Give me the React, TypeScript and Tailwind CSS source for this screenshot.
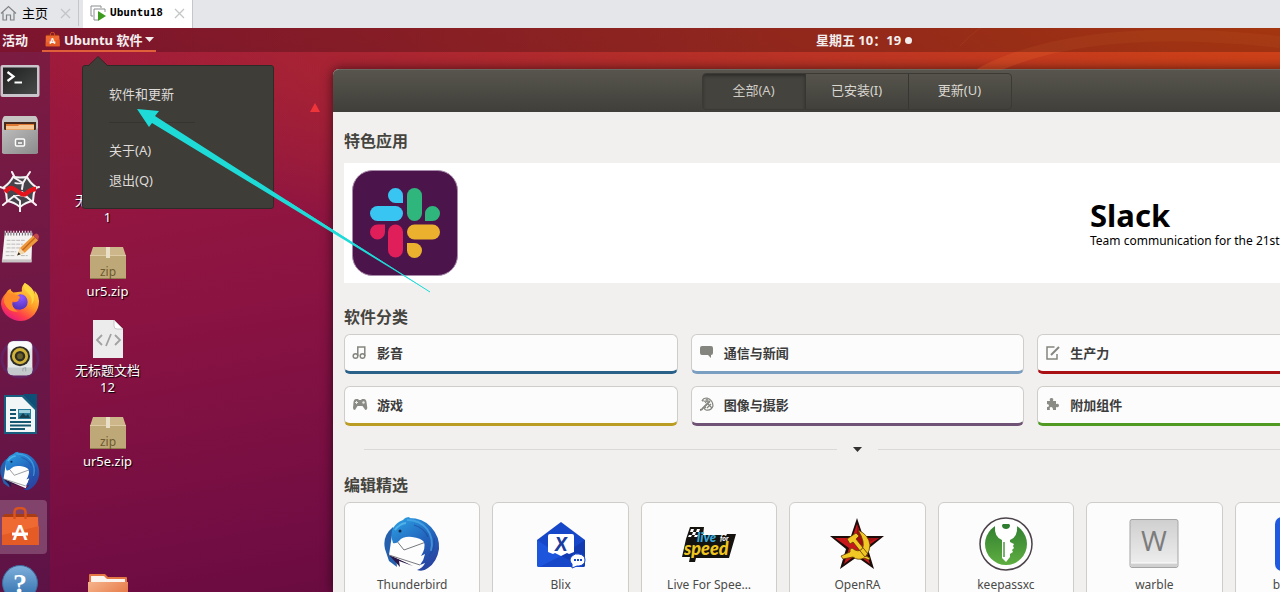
import type { ReactNode } from 'react';

const uiFont = "font-['Noto_Sans','Noto_Sans_CJK_SC',sans-serif]";

function TerminalIcon() {
  return (
    <svg width="40" height="40" viewBox="0 0 40 40">
      <defs>
        <linearGradient id="term" x1="0" y1="0" x2="1" y2="1">
          <stop offset="0" stopColor="#1e2020" />
          <stop offset="1" stopColor="#484a4a" />
        </linearGradient>
      </defs>
      <rect x="0.5" y="6" width="39" height="32" rx="2" fill="#c9c5ca" />
      <rect x="3" y="8.500" width="34" height="26.500" fill="url(#term)" />
      <path d="M7.500 13l6 4.500-6 4.500" fill="none" stroke="#fff" strokeWidth="2.200" />
      <path d="M14.500 23.500H22" stroke="#fff" strokeWidth="2" />
    </svg>
  );
}

function FilesIcon() {
  return (
    <svg width="40" height="40" viewBox="0 0 40 40">
      <defs>
        <linearGradient id="cabinet" x1="0" y1="0" x2="1" y2="1">
          <stop offset="0" stopColor="#bdbdbd" />
          <stop offset="1" stopColor="#8b8b8b" />
        </linearGradient>
      </defs>
      <path d="M5 1h30q2 0 3 5v32H2V6q1-5 3-5z" fill="#c7c5c4" />
      <path d="M4 7h32v10H4z" fill="#4a2a1c" />
      <path d="M6 9h28v7H6z" fill="#e07a33" />
      <path d="M6 11h12l1-1h15v6H6z" fill="#f6c795" />
      <path d="M6 14h28v3H6z" fill="#e6a468" />
      <path d="M2 13l3 2h30l3-2v24a2 2 0 0 1-2 2H4a2 2 0 0 1-2-2z" fill="url(#cabinet)" />
      <rect x="15.500" y="24" width="9" height="7" rx="1" fill="#8e8e8e" stroke="#fff" strokeWidth="1.500" />
      <path d="M18 28h4" stroke="#fff" strokeWidth="1.500" />
    </svg>
  );
}

function WebIcon() {
  return (
    <svg width="40" height="42" viewBox="0 0 40 42">
      <path d="M13 6h14l9 11-3 14-13 6-13-6L4 17z" fill="#46434b" />
      <g fill="none" stroke="#f7f1f4" strokeWidth="2" strokeLinecap="round">
        <path d="M13 7q7 1 14 0 3 6 9 10-3 7-3 14-7 1-13 6-6-5-13-6 0-7-3-14 6-4 9-10z" />
        <path d="M12 2l3 6 8 5M30 2l-4 6-3 5-1 6M39 17l-7 2M36 35l-8-7-6-6M20 42V31l-6-5M3 35l11-9M0 17l9 3" />
        <path d="M15 13q4 1 8 0M14 26q7-2 14 2" strokeWidth="1.300" />
      </g>
      <path d="M5 22q5-6 9-3l6 4q4 3 7 0 4-4 9-4" fill="none" stroke="#e3131b" strokeWidth="4.500" />
    </svg>
  );
}

function NotesIcon() {
  return (
    <svg width="42" height="40" viewBox="0 0 42 40">
      <path d="M5 5h29l-1 31H2z" fill="#f4f3f1" />
      <path d="M2 33h31v3H2z" fill="#c9c5c5" />
      <path d="M7 13h20M7 17h17M7 21h18M6 25h11M6 29h9M22 29h7" stroke="#b8b6b4" strokeWidth="1" strokeDasharray="4 1" />
      <path d="M5 6h29" stroke="#5c5560" strokeWidth="4" strokeDasharray="1 2" />
      <path d="M5 4h29" stroke="#fff" strokeWidth="2" strokeDasharray="1 2" />
      <path d="M18 29l3-8L35 8l5 5-14 13z" fill="#ee9a3c" />
      <path d="M23 24L37 10" stroke="#c5671d" strokeWidth="1.500" />
      <path d="M18 29l3-8 5 5z" fill="#f3d8ae" />
      <path d="M18 29l1.500-3.500 2 2z" fill="#222" />
      <path d="M35 8l2-2q3-1 4 3l-1 4z" fill="#c3474c" />
    </svg>
  );
}

function FirefoxIcon() {
  return (
    <svg width="42" height="42" viewBox="0 0 42 42">
      <defs>
        <linearGradient id="fox" x1="0.850" y1="0.050" x2="0.250" y2="1">
          <stop offset="0" stopColor="#ffe44a" />
          <stop offset="0.450" stopColor="#ff9a27" />
          <stop offset="0.750" stopColor="#ff3e4b" />
          <stop offset="1" stopColor="#e31587" />
        </linearGradient>
        <radialGradient id="globe" cx="0.600" cy="0.200" r="0.900">
          <stop offset="0" stopColor="#9059ff" />
          <stop offset="1" stopColor="#4a2cb3" />
        </radialGradient>
      </defs>
      <path
        d="M26 0q-4 4-3 9l-9 1q-3-2-3-4-3 1-5 5Q1 16 1 22q1 8 7 13t14 5q9-1 14-7t5-14q-1-8-5-11l1 4q-3-8-11-12z"
        fill="url(#fox)"
      />
      <path d="M20 12q8-1 9 8 0 7-8 8-9 0-9-8 4 1 7-1 2-1-3-3 1-3 4-4z" fill="url(#globe)" />
      <path d="M6 12q5-2 9 0l4 1q3 1 1 4-3 2-7 2-1 8 6 11-10 1-14-8-2-5 1-10z" fill="#ff8a2b" />
      <path d="M26 0q-3 6 3 10 6 5 4 13 4-5 2-12-3-8-9-11z" fill="#ffd83f" />
    </svg>
  );
}

function SpeakerIcon() {
  return (
    <svg width="42" height="42" viewBox="0 0 42 42">
      <circle cx="21" cy="21" r="19" fill="none" stroke="#5b2c74" strokeWidth="3" opacity="0.6" />
      <rect x="8" y="2" width="26" height="36" rx="6" fill="#e4e7e8" />
      <rect x="9" y="3" width="24" height="9" rx="5" fill="#fbfbfb" />
      <path d="M8 30h26v3q0 5-6 5H14q-6 0-6-5z" fill="#c5cbcd" />
      <circle cx="21" cy="18" r="10.500" fill="#2d2c25" />
      <circle cx="21" cy="18" r="7" fill="none" stroke="#d0b23a" strokeWidth="3" />
      <circle cx="21" cy="18" r="3" fill="#69602a" />
      <path d="M24 34v-3l3-1v4" fill="none" stroke="#99a0a3" />
    </svg>
  );
}

function WriterIcon() {
  return (
    <svg width="40" height="42" viewBox="0 0 40 42">
      <path d="M4 1h20l13 13v26H4z" fill="#175f80" />
      <path d="M6 3h16l13 13v22H6z" fill="#f3f6f7" />
      <path d="M23 0h14v15z" fill="#0e4f77" />
      <path d="M10 16h6M10 20h6M10 24h6M10 28h21M10 31.500h21M10 35h15" stroke="#17566f" strokeWidth="2" />
      <rect x="18" y="15" width="13" height="10" fill="#2b7d9c" />
      <path d="M19 24l4-5 3 3 2-2 2 4z" fill="#153e4e" />
      <path d="M19 16h11v3H19z" fill="#9ed0de" />
    </svg>
  );
}

function ThunderbirdIcon({ size, id }: { size: number; id: string }) {
  return (
    <svg width={size} height={size} viewBox="0 0 56 56">
      <defs>
        <linearGradient id={id} x1="0.200" y1="0" x2="0.800" y2="1">
          <stop offset="0" stopColor="#2c9be0" />
          <stop offset="0.500" stopColor="#2265bd" />
          <stop offset="1" stopColor="#2b3f9d" />
        </linearGradient>
      </defs>
      <path d="M9 11Q-2 20 1 33l4 12 8 6z" fill="#2560ae" />
      <path d="M4 38l12 13-1-6 14 5z" fill="#2b1747" />
      <path d="M8 19l35 0-2 20-5 13L5 39z" fill="#fdfdfd" />
      <path d="M8 19l12 15 22-8M5 39l31 10" fill="none" stroke="#77797e" strokeWidth="1" />
      <path
        d="M9 12Q13 6 19 4q2-3 7-3l-1 1q14 0 22 9 9 10 8 22-2 13-11 19-5 4-11 2 6-2 8-7l-5 2q4-5 5-11l-4 2q5-8 3-14-3-4-12-5-9-1-13 4-3 3-6 2Q6 18 9 12z"
        fill={`url(#${id})`}
      />
      <path d="M23 4q13 0 20 9 7 9 4 22" fill="none" stroke="#53b4ee" strokeWidth="2" opacity="0.600" />
      <path d="M30 9q10 3 14 12M50 22q2 10-5 18" fill="none" stroke="#1c4c9f" strokeWidth="1.200" opacity="0.700" />
      <path d="M11 14q4-6 11-7" fill="none" stroke="#60c1ee" strokeWidth="2" opacity="0.700" />
      <circle cx="16" cy="15" r="1.500" fill="#12294f" />
    </svg>
  );
}

function SoftwareIcon({ size }: { size: number }) {
  return (
    <svg width={size} height={size} viewBox="0 0 40 40">
      <path d="M3 9q0-2 3-2h28q3 0 3 2v4H3z" fill="#a93c13" />
      <path d="M2 10h36l1 27q0 1-1 1H3q-1 0-1-1z" fill="#ef6a33" />
      <path d="M2 28l37-9v18q0 1-1 1H3q-1 0-1-1z" fill="#e55b26" />
      <path d="M14.500 12V5q0-4 5.500-4t5.500 4v7" fill="none" stroke="#d9531f" strokeWidth="2.500" />
      <text x="20" y="33" textAnchor="middle" fontSize="21" fontWeight="700" fill="#fff" fontFamily="Lato, sans-serif">
        A
      </text>
      <path d="M12 27h16" stroke="#fff" strokeWidth="3" />
    </svg>
  );
}

function HelpIcon() {
  return (
    <svg width="40" height="40" viewBox="0 0 40 40">
      <defs>
        <linearGradient id="help" x1="0" y1="0" x2="0" y2="1">
          <stop offset="0" stopColor="#7fb0dc" />
          <stop offset="1" stopColor="#2c6aa9" />
        </linearGradient>
      </defs>
      <circle cx="20" cy="20" r="17.500" fill="url(#help)" stroke="#3c6c9f" />
      <text x="20" y="30" textAnchor="middle" fontSize="28" fill="#fff" fontFamily="Liberation Serif, serif" fontWeight="700">
        ?
      </text>
    </svg>
  );
}

function ZipIcon() {
  return (
    <svg width="38" height="34" viewBox="0 0 38 34" className="text-shadow-none">
      <path d="M4 1h30l3 9H1z" fill="#cdb78a" />
      <path d="M1 9h36v24H1z" fill="#bfa878" />
      <path d="M1 9h36v1H1z" fill="#dccba5" />
      <path d="M1 32h36v1H1z" fill="#927c50" />
      <path d="M17 1h4v11h-4z" fill="#e9dfc7" />
      <text x="19" y="30" textAnchor="middle" fontSize="12" fill="#6d5a2e" fontFamily="Noto Sans, sans-serif">
        zip
      </text>
    </svg>
  );
}

function CodeFileIcon() {
  return (
    <svg width="32" height="40" viewBox="0 0 32 40">
      <path d="M1 1h21l9 9v29H1z" fill="#ececec" />
      <path d="M22 1v6q0 3 3 3h6z" fill="#fff" stroke="#bcbcbc" strokeWidth="0.800" />
      <path d="M10 16l-5 5 5 5M23 16l5 5-5 5M19 15l-5 12" fill="none" stroke="#a2a2a2" strokeWidth="1.800" />
    </svg>
  );
}

function FolderIcon() {
  return (
    <svg width="40" height="36" viewBox="0 0 40 36">
      <defs>
        <linearGradient id="folder" x1="0" y1="0" x2="1" y2="1">
          <stop offset="0" stopColor="#f6b48c" />
          <stop offset="1" stopColor="#e0622c" />
        </linearGradient>
      </defs>
      <path d="M1 2q0-1 1-1h15l3 3h18q1 0 1 1v8H1z" fill="#e57743" />
      <path d="M3 3h13l3 3h18v5H3z" fill="#fbf3ee" />
      <path d="M0 9h40v25q0 2-2 2H2q-2 0-2-2z" fill="url(#folder)" />
    </svg>
  );
}

function SlackIcon() {
  return (
    <svg width="108" height="108" viewBox="0 0 108 108" className="shrink-0">
      <rect x="1.500" y="1.500" width="105" height="105" rx="20" fill="#4b154b" stroke="#a98bab" strokeWidth="1" />
      <g fill="#39c5f1">
        <path d="M44.500 19a7.500 7.500 0 0 1 7.500 7.500V34h-7.500a7.500 7.500 0 0 1 0-15z" />
        <rect x="19" y="37" width="33" height="15" rx="7.500" />
      </g>
      <g fill="#2fb67c">
        <rect x="56" y="19" width="15" height="33" rx="7.500" />
        <path d="M74 52v-7.500a7.500 7.500 0 1 1 7.500 7.500z" />
      </g>
      <g fill="#ebb02e">
        <rect x="56" y="55.500" width="33" height="15" rx="7.500" />
        <path d="M56 74h7.500a7.500 7.500 0 1 1-7.500 7.500z" />
      </g>
      <g fill="#e01e5a">
        <path d="M34 55.500V63a7.500 7.500 0 1 1-7.500-7.500z" />
        <rect x="37" y="55.500" width="15" height="33" rx="7.500" />
      </g>
    </svg>
  );
}

function BlixIcon() {
  return (
    <svg width="56" height="56" viewBox="0 0 56 56">
      <path d="M4 24L28 6l24 18v25q0 2-2 2H6q-2 0-2-2z" fill="#1747c9" />
      <path d="M4 24l24 16L6 51q-2 0-2-2z" fill="#1d55dd" />
      <path d="M52 24L28 40l22 11q2 0 2-2z" fill="#123bb2" />
      <path d="M17 18h22q2 0 2 2v16l-5 2-2-1-6 3-6-3-2 1-5-2V20q0-2 2-2z" fill="#fff" />
      <text x="28" y="35" textAnchor="middle" fontSize="19" fontWeight="900" fontStyle="italic" fill="#1a3c9c" fontFamily="Lato, sans-serif">
        X
      </text>
      <path d="M39 48q-4-4 0-8 3-3 7-2 6 1 6 6t-6 6h-2l-5 2z" fill="#fff" stroke="#1747c9" />
      <path d="M41 44h8" stroke="#1747c9" strokeWidth="2" strokeDasharray="2 1" />
    </svg>
  );
}

function LiveForSpeedIcon() {
  return (
    <svg width="56" height="56" viewBox="0 0 56 56">
      <path d="M9 11h14l-1 8h21l2 1 1-2h9l-7 24H15l-1 4H8l1-5H1l4-18z" fill="#15130f" />
      <path d="M10 13h3l-1 3h3l1-3h3l-1 3h-3l-1 3h3l-1 2h-3l1-2h-3l-1 2H7l1-2h3l1-3H9z" fill="#fff" />
      <g fontFamily="Lato, sans-serif" fontStyle="italic" fontWeight="900">
        <text x="16" y="26" fontSize="13" fill="#3ba9dc">
          live
        </text>
        <text x="39" y="25" fontSize="7" fill="#fff">
          for
        </text>
        <text x="3" y="39" fontSize="18" fill="#efc51f">
          speed
        </text>
      </g>
    </svg>
  );
}

function OpenRaIcon() {
  return (
    <svg width="56" height="56" viewBox="0 0 56 56">
      <path d="M28 2l6 18h21L39 33l6 20-17-12-17 12 6-20L1 20h21z" fill="#1c0c0a" />
      <path d="M28 8l5 14h17L36 32l5 16-13-10-13 10 5-16L6 22h17z" fill="#c9161b" />
      <path d="M28 8l5 14h17L28 31z" fill="#a10f13" />
      <path
        d="M29 14q11 5 12 15 0 6-4 11l4 2-1 2-5-2q-6 3-11-1l-10 2-2-3 9-4q-1-3 2-4 6 5 10 1 4-6-4-19zM18 23l9-6 3 3-3 3 12 15-3 3-12-15-3 2z"
        fill="#f1c824"
        stroke="#5e3a09"
        strokeWidth="0.800"
      />
    </svg>
  );
}

function KeepassIcon() {
  return (
    <svg width="56" height="56" viewBox="0 0 56 56">
      <defs>
        <linearGradient id="keepass" x1="0" y1="0" x2="0" y2="1">
          <stop offset="0" stopColor="#2f7d2f" />
          <stop offset="1" stopColor="#5fae41" />
        </linearGradient>
      </defs>
      <circle cx="28" cy="28" r="26" fill="#fff" stroke="#4c434b" strokeWidth="1.500" />
      <circle cx="28" cy="28" r="21" fill="url(#keepass)" />
      <path d="M19 6h18l2 4q1 11-7 14v2l4 2-1 2 1 2-2 2 1 2-3 2v3l-4 5-4-4V24q-8-3-7-14z" fill="#fff" />
      <path d="M25 8h6q2 1 0 4-3 2-6 0-2-3 0-4z" fill="#2f7d2f" />
      <path d="M26 26v15" stroke="#4a9a3a" strokeWidth="1.500" />
    </svg>
  );
}

function WarbleIcon() {
  return (
    <svg width="56" height="56" viewBox="0 0 56 56">
      <defs>
        <linearGradient id="warble" x1="0" y1="0" x2="0" y2="1">
          <stop offset="0" stopColor="#cfcfcf" />
          <stop offset="1" stopColor="#f0f0f0" />
        </linearGradient>
      </defs>
      <rect x="4" y="3.500" width="48" height="48" rx="2" fill="url(#warble)" stroke="#a5a5a5" />
      <path d="M5 47h46v4H5z" fill="#d0d0d0" />
      <path d="M5 47h46" stroke="#fff" />
      <text x="28" y="35" textAnchor="middle" fontSize="28" fill="#7c7c7c" fontFamily="Open Sans, sans-serif">
        W
      </text>
    </svg>
  );
}

function BlueIcon() {
  return (
    <svg width="56" height="56" viewBox="0 0 56 56">
      <rect x="0" y="1" width="56" height="54" rx="7" fill="#1f5ae0" />
    </svg>
  );
}

function MusicGlyph() {
  return (
    <svg width="16" height="16" viewBox="0 0 16 16" fill="none" stroke="#85857f" strokeWidth="1.500">
      <circle cx="3.500" cy="11" r="2.300" />
      <circle cx="10.500" cy="11" r="2.300" />
      <path d="M5.800 11V2h7v9" />
    </svg>
  );
}

function ChatGlyph() {
  return (
    <svg width="16" height="16" viewBox="0 0 16 16" fill="#85857f">
      <path d="M3 1h9q2 0 2 2v5q0 2-2 2v3l-3-3H3q-2 0-2-2V3q0-2 2-2z" />
    </svg>
  );
}

function EditGlyph() {
  return (
    <svg width="16" height="16" viewBox="0 0 16 16" fill="none" stroke="#85857f" strokeWidth="1.500">
      <path d="M9.500 2H2v12h10V9" />
      <path d="M6 10l8-8" strokeWidth="2" />
    </svg>
  );
}

function GamepadGlyph() {
  return (
    <svg width="16" height="16" viewBox="0 0 16 16">
      <path d="M4 2h2l1 1h2l1-1h2q2 0 2.500 3l.8 6q0 2-2 2L10.500 9h-5L3 13q-2 0-2-2l.5-6Q2 2 4 2z" fill="#8b8b86" />
      <path d="M3 5.500h3M4.500 4v3" stroke="#e8e8e6" />
      <circle cx="11.500" cy="5.500" r="1.200" fill="#e8e8e6" />
    </svg>
  );
}

function PaletteGlyph() {
  return (
    <svg width="16" height="16" viewBox="0 0 16 16" fill="none" stroke="#85857f" strokeWidth="1.200">
      <path d="M3 4q1-3 5-3 6 2 6 8-2 5-7 4-3-1 0-3" />
      <path d="M1 13q2 0 3-2l7-7" strokeWidth="1.800" />
      <path d="M3 4q3-1 4 2M9 7l4 4M8 11l4-4" />
      <circle cx="8" cy="3.500" r="1" />
    </svg>
  );
}

function PuzzleGlyph() {
  return (
    <svg width="16" height="16" viewBox="0 0 16 16" fill="#8b8b86">
      <path d="M2 4h3q-1-3 1.500-3T8 4h3v3q3-1 3 1.500T11 10v3H8q0-3-2-3t-1 3H2v-3q2 0 2-1.500T2 7z" />
    </svg>
  );
}

const dockItems = [
  { name: 'Terminal', icon: <TerminalIcon /> },
  { name: 'Files', icon: <FilesIcon /> },
  { name: 'Web', icon: <WebIcon /> },
  { name: 'Notes', icon: <NotesIcon /> },
  { name: 'Firefox', icon: <FirefoxIcon /> },
  { name: 'Rhythmbox', icon: <SpeakerIcon /> },
  { name: 'Writer', icon: <WriterIcon /> },
  { name: 'Thunderbird', icon: <ThunderbirdIcon size={42} id="dockbird" /> },
  { name: 'Software', icon: <SoftwareIcon size={40} />, active: true },
  { name: 'Help', icon: <HelpIcon /> },
];

const desktopItems = [
  { icon: <CodeFileIcon />, lines: ['无标题文档', '1'] },
  { icon: <ZipIcon />, lines: ['ur5.zip'] },
  { icon: <CodeFileIcon />, lines: ['无标题文档', '12'] },
  { icon: <ZipIcon />, lines: ['ur5e.zip'] },
];

const categories = [
  { name: '影音', icon: <MusicGlyph />, color: 'border-b-[#2a6188]' },
  { name: '通信与新闻', icon: <ChatGlyph />, color: 'border-b-[#7a9fc0]' },
  { name: '生产力', icon: <EditGlyph />, color: 'border-b-[#a81014]' },
  { name: '游戏', icon: <GamepadGlyph />, color: 'border-b-[#bb9d24]' },
  { name: '图像与摄影', icon: <PaletteGlyph />, color: 'border-b-[#6f5275]' },
  { name: '附加组件', icon: <PuzzleGlyph />, color: 'border-b-[#509a24]' },
];

const picks = [
  { name: 'Thunderbird', icon: <ThunderbirdIcon size={56} id="cardbird" /> },
  { name: 'Blix', icon: <BlixIcon /> },
  { name: 'Live For Spee…', icon: <LiveForSpeedIcon /> },
  { name: 'OpenRA', icon: <OpenRaIcon /> },
  { name: 'keepassxc', icon: <KeepassIcon /> },
  { name: 'warble', icon: <WarbleIcon /> },
  { name: 'beekeeper', icon: <BlueIcon /> },
];

function CloseMark() {
  return (
    <svg width="11" height="11" viewBox="0 0 11 11" stroke="#c3c5c6" strokeWidth="1.300">
      <path d="M1 1l9 9M10 1l-9 9" />
    </svg>
  );
}

function TabBar() {
  return (
    <div className="flex h-7 shrink-0 items-stretch bg-[#e4e6e9] pb-[2px] text-[13px] text-black">
      <button className="flex items-center border-r border-[#c4c6c9] pr-[7px]">
        <svg width="17" height="16" viewBox="0 0 17 16" fill="none" stroke="#808488" strokeWidth="1.200">
          <path d="M1 8.500L8.500 1.500 16 8.500M3 7.500V15h3.500v-5h4v5H14V7.500" />
        </svg>
        <span className="ml-[5px] mr-3 leading-5">主页</span>
        <CloseMark />
      </button>
      <button className="-mb-[2px] ml-1 flex items-center border-r border-[#c4c6c9] bg-white px-[7px] pb-[2px]">
        <svg width="16" height="16" viewBox="0 0 16 16">
          <path d="M11 3V1H1v10h2" fill="none" stroke="#8a8d90" />
          <path d="M15 7V4H4v11h4" fill="none" stroke="#8a8d90" />
          <path d="M8 6l8 5-8 5z" fill="#3d9b1f" />
        </svg>
        <span className="ml-1 mr-[11px] font-['DejaVu_Sans_Mono',monospace] text-[11px] font-bold">Ubuntu18</span>
        <CloseMark />
      </button>
    </div>
  );
}

function TopBar() {
  return (
    <div className="relative -mr-[448px] grid h-6 shrink-0 grid-cols-[1fr_auto_1fr] items-center bg-black/22 text-[13px] font-bold text-[#f3eeee]">
      <div className="flex h-6 items-center">
        <button className="ml-[2px] leading-5">活动</button>
        <button className="ml-[14px] flex h-6 items-center border-b-2 border-[#e0603a] pl-[3px] pr-[2px] leading-5">
          <SoftwareIcon size={15} />
          <span className="ml-1 mr-[3px] pt-[2px]">Ubuntu 软件</span>
          <svg width="9" height="5" viewBox="0 0 9 5" fill="#f3eeee">
            <path d="M0 0h9L4.500 5z" />
          </svg>
        </button>
      </div>
      <button className="flex items-center gap-1 leading-5">
        星期五 10：19
        <span className="size-[7px] rounded-full bg-[#f3eeee]" />
      </button>
    </div>
  );
}

function Dock() {
  return (
    <nav className="flex w-[50px] shrink-0 flex-col gap-[2px] bg-[#3a1f4c]/35">
      {dockItems.map((item) => (
        <button
          key={item.name}
          aria-label={item.name}
          className={`flex h-[54px] w-[47px] shrink-0 items-center rounded-r ${item.active ? 'bg-white/20' : ''}`}
        >
          <span className="flex w-10 justify-center">{item.icon}</span>
        </button>
      ))}
    </nav>
  );
}

function DesktopItem({ icon, lines }: { icon: ReactNode; lines: string[] }) {
  return (
    <div className="flex h-[85px] shrink-0 flex-col items-center justify-center gap-[3px] text-center text-[13px] leading-[17px] text-white text-shadow-[1px_1px_1px_#000]">
      {icon}
      <div>
        {lines.map((line) => (
          <div key={line}>{line}</div>
        ))}
      </div>
    </div>
  );
}

function Desktop() {
  return (
    <div className="w-[283px] shrink-0">
      <div className="flex w-[115px] flex-col pt-[93px]">
        {desktopItems.map((item) => (
          <DesktopItem key={item.lines.join(' ')} {...item} />
        ))}
        <div className="flex justify-center pt-[88px]">
          <FolderIcon />
        </div>
      </div>
    </div>
  );
}

function AppMenu() {
  return (
    <div className="absolute left-[82px] top-[37px] w-48 rounded-[3px] border border-[#2c2b28] bg-[#3e3d38] pb-3 pt-[14px] text-[13px] text-[#dedcd8]">
      <svg className="absolute -top-[10px] left-[5px]" width="20" height="11" viewBox="0 0 20 11">
        <path d="M0 10.500L10 0.500l10 10V11H0z" fill="#3e3d38" />
        <path d="M0 10l10-9.500 10 9.500" fill="none" stroke="#2c2b28" />
      </svg>
      <button className="block h-[30px] w-full pl-[26px] text-left">软件和更新</button>
      <hr className="ml-[26px] mr-[78px] mt-3 mb-[13px] border-[#35342f]" />
      <button className="block h-[30px] w-full pl-[26px] text-left">关于(A)</button>
      <button className="block h-[30px] w-full pl-[26px] text-left">退出(Q)</button>
    </div>
  );
}

function Heading({ children }: { children: ReactNode }) {
  return <h2 className="text-base font-bold leading-6 text-[#45443f]">{children}</h2>;
}

function SoftwareWindow() {
  return (
    <main className="-mr-[102px] mt-[17px] flex min-w-0 flex-1 flex-col rounded-t-md bg-[#f1f0ee] shadow-[0_0_12px_rgba(0,0,0,0.6)]">
      <header className="flex h-[43px] shrink-0 items-center justify-center rounded-t-md border-t border-[#6a6860] bg-linear-to-b from-[#57554d] to-[#403f3a] pr-[2px] text-[13px] text-[#dad7d0]">
        <div className="flex h-[37px] w-[310px] divide-x divide-[#373632] overflow-hidden rounded border border-[#3b3a35]">
          <button className="flex-1 bg-[#44433e] text-[#cfccc5] shadow-[inset_0_2px_3px_#2f2e2a]">全部(A)</button>
          <button className="flex-1">已安装(I)</button>
          <button className="flex-1">更新(U)</button>
        </div>
      </header>
      <div className="px-[11px] pt-[17px]">
        <Heading>特色应用</Heading>
        <a href="#slack" className="mt-[10px] flex h-[120px] items-center bg-white pl-[7px] text-black">
          <SlackIcon />
          <div className="ml-auto w-[281px]">
            <div className="text-[31px] font-bold leading-9">Slack</div>
            <div className="whitespace-nowrap text-[12px] leading-4">Team communication for the 21st century</div>
          </div>
        </a>
        <div className="mt-[22px]">
          <Heading>软件分类</Heading>
        </div>
        <div className="mt-[5px] grid grid-cols-3 gap-x-[13px] gap-y-3">
          {categories.map((category) => (
            <button
              key={category.name}
              className={`flex h-10 items-center gap-[9px] rounded-md border border-b-[3px] border-[#cfcdca] bg-[#fcfcfc] pl-[7px] text-[13px] font-bold text-[#3c3c3c] ${category.color}`}
            >
              {category.icon}
              <span className="pt-[2px]">{category.name}</span>
            </button>
          ))}
        </div>
        <div className="mt-[11px] flex h-6 items-center gap-4 px-5">
          <div className="h-px flex-1 bg-[#dbd9d6]" />
          <button aria-label="展开">
            <svg width="9" height="5" viewBox="0 0 9 5" fill="#33322f">
              <path d="M0 0h9L4.500 5z" />
            </svg>
          </button>
          <div className="h-px flex-1 bg-[#dbd9d6]" />
        </div>
        <div className="mt-3">
          <Heading>编辑精选</Heading>
        </div>
        <div className="mt-[5px] grid grid-cols-7 gap-3">
          {picks.map((pick) => (
            <button
              key={pick.name}
              className="flex h-[136px] flex-col items-center gap-[3px] rounded-md border border-[#cfcdca] bg-[#fcfcfc] pt-[13px] text-[12px] leading-5 text-[#4a4a48]"
            >
              {pick.icon}
              {pick.name}
            </button>
          ))}
        </div>
      </div>
    </main>
  );
}

export default function App() {
  return (
    <div className={`flex h-screen flex-col overflow-hidden ${uiFont}`}>
      <TabBar />
      <div className="relative flex min-h-0 flex-1 flex-col overflow-hidden bg-[radial-gradient(ellipse_100%_50%_at_100%_0,#d24514,transparent),linear-gradient(170deg,#a01a3c,#8a1342_40%,#720d43_70%,#560838)]">
        <svg className="absolute right-0 top-0" width="320" height="42" viewBox="0 0 320 42" fill="none">
          <path d="M20 46Q120-8 320 14" stroke="#e8642a" strokeWidth="12" opacity="0.250" />
          <path d="M-20 42Q0 15 20 0" stroke="#e8642a" opacity="0.300" />
        </svg>
        <TopBar />
        <div className="flex min-h-0 flex-1">
          <Dock />
          <Desktop />
          <SoftwareWindow />
        </div>
        <svg className="absolute left-[310px] top-[75px]" width="10" height="9" viewBox="0 0 10 9" fill="#f0353a">
          <path d="M5 0l5 9H0z" />
        </svg>
        <AppMenu />
        <svg className="pointer-events-none absolute left-[137px] top-[81px]" width="294" height="184" viewBox="0 0 294 184">
          <path d="M0 0l22 2-4 5 275 176L15 14l-3 4z" fill="#1edbd8" />
          <path d="M150 92L293 183" stroke="#1edbd8" />
        </svg>
      </div>
    </div>
  );
}
